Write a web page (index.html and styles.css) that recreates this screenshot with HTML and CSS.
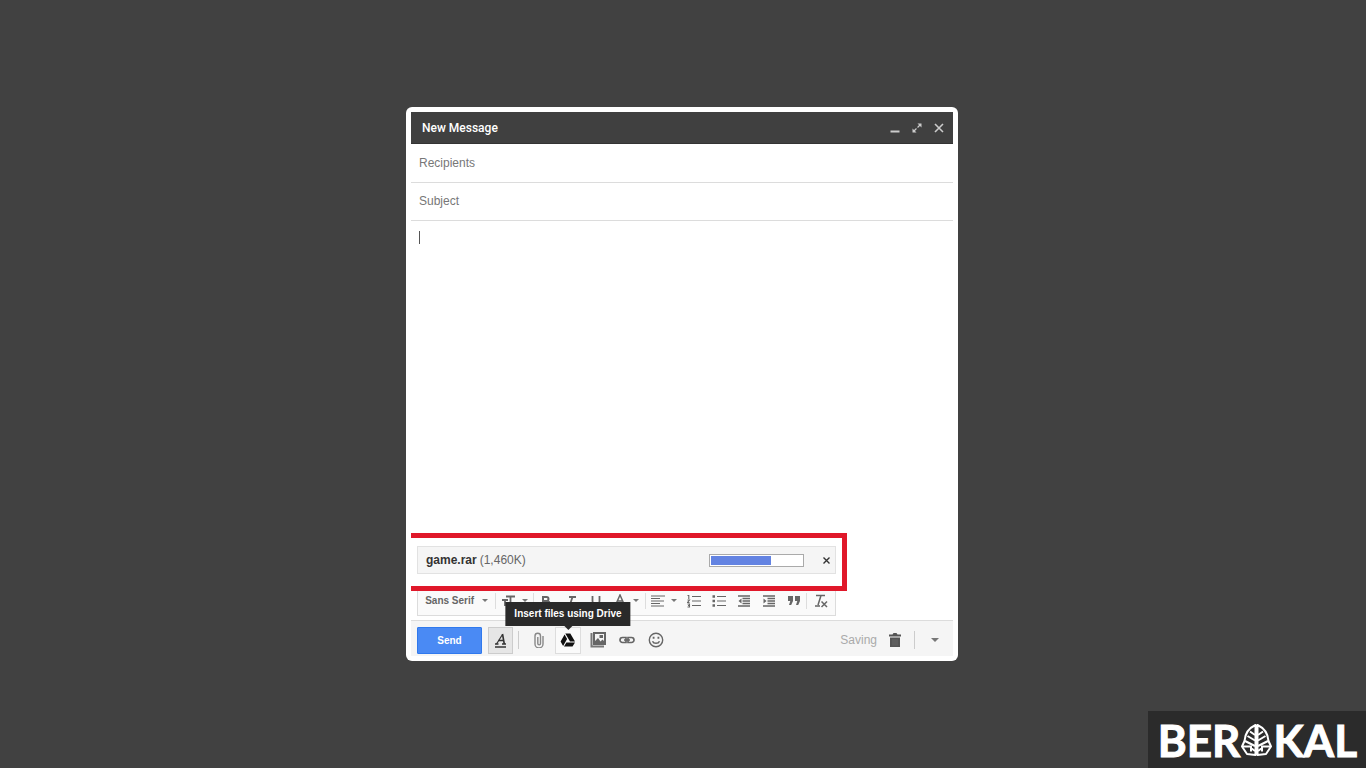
FILE: index.html
```html
<!DOCTYPE html>
<html lang="en">
<head>
<meta charset="utf-8">
<meta name="viewport" content="width=device-width, initial-scale=1">
<title>New Message</title>
<link rel="stylesheet" href="styles.css">
</head>
<body>
<main class="stage">
  <form class="compose" onsubmit="return false">
    <header class="compose-header">
      <h1 class="compose-title">New Message</h1>
      <button type="button" class="window-button" aria-label="Minimize"><svg width="12" height="12" viewBox="0 0 12 12"><path d="M1.5 9.500h9" stroke="currentColor" stroke-width="2"/></svg></button>
      <button type="button" class="window-button" aria-label="Full screen"><svg width="12" height="12" viewBox="0 0 12 12"><path d="M3 9l6-6" stroke="currentColor" stroke-width="1.200" stroke-dasharray="3.500 1.500"/><path d="M6.500 1.500h4v4zM1.500 6.500v4h4z" fill="currentColor"/></svg></button>
      <button type="button" class="window-button" aria-label="Close"><svg width="12" height="12" viewBox="0 0 12 12"><path d="M2 2l8 8M10 2l-8 8" stroke="currentColor" stroke-width="1.600"/></svg></button>
    </header>
    <input class="field" type="text" aria-label="Recipients" placeholder="Recipients">
    <input class="field" type="text" aria-label="Subject" placeholder="Subject">
    <textarea class="message" aria-label="Message body"></textarea>

    <section class="highlight" aria-label="Attachments">
      <div class="attachment">
        <span class="file-name">game.rar</span>
        <span class="file-size">(1,460K)</span>
        <div class="progress" role="progressbar" aria-label="Upload progress" aria-valuenow="66" aria-valuemin="0" aria-valuemax="100"><div class="progress-fill" style="width:66%"></div></div>
        <button type="button" class="remove" aria-label="Cancel upload"><svg width="9" height="9" viewBox="0 0 9 9"><path d="M1.500 1.500l6 6M7.500 1.500l-6 6" stroke="currentColor" stroke-width="1.400"/></svg></button>
      </div>
    </section>

    <div class="format-bar" role="toolbar" aria-label="Formatting">
      <button type="button" class="format font-picker">Sans Serif<span class="caret"></span></button>
      <span class="divider"></span>
      <button type="button" class="format with-caret" aria-label="Size"><svg width="14" height="14" viewBox="0 0 14 14"><path d="M4 2.500h9M8.500 2.500V12M0 6h6M3 6v6" fill="none" stroke="currentColor" stroke-width="1.800"/></svg><span class="caret"></span></button>
      <span class="divider"></span>
      <div class="format-group">
        <button type="button" class="format" aria-label="Bold"><svg width="14" height="14" viewBox="0 0 14 14"><path d="M4 3v9h4a2.300 2.300 0 0 0 0-5H4h3.500a2 2 0 0 0 0-4z" fill="none" stroke="currentColor" stroke-width="2"/></svg></button>
        <button type="button" class="format" aria-label="Italic"><svg width="14" height="14" viewBox="0 0 14 14"><path d="M5 3h7M2 12h7M8.500 3l-3 9" stroke="currentColor" stroke-width="1.800"/></svg></button>
        <button type="button" class="format" aria-label="Underline"><svg width="14" height="14" viewBox="0 0 14 14"><path d="M3.500 2v5a3.500 3.500 0 0 0 7 0V2M2 13h10" fill="none" stroke="currentColor" stroke-width="1.800"/></svg></button>
      </div>
      <button type="button" class="format with-caret" aria-label="Text color"><svg width="14" height="14" viewBox="0 0 14 14"><path d="M3 10l4-9 4 9M4.500 7h5M1 13h12" fill="none" stroke="currentColor" stroke-width="1.500"/></svg><span class="caret"></span></button>
      <span class="divider"></span>
      <button type="button" class="format with-caret" aria-label="Align"><svg width="14" height="14" viewBox="0 0 14 14"><path d="M0 2h14M0 4.500h9M0 7h13M0 9.500h9M0 12h13" stroke="currentColor" stroke-width="1.200"/></svg><span class="caret"></span></button>
      <div class="format-group">
        <button type="button" class="format" aria-label="Numbered list"><svg width="14" height="14" viewBox="0 0 14 14"><path d="M5 2.500h9M5 7h9M5 11.500h9" stroke="currentColor" stroke-width="1.200"/><path d="M.5 1.500h1.300V5M.5 6h2L.5 8.500h2M.5 10h2v3h-2M1 11.500h1.500" fill="none" stroke="currentColor" stroke-width="1.100"/></svg></button>
        <button type="button" class="format" aria-label="Bulleted list"><svg width="14" height="14" viewBox="0 0 14 14"><path d="M5 2.500h9M5 7h9M5 11.500h9" stroke="currentColor" stroke-width="1.200"/><path d="M.5 1.200H3v2.500H.5zM.5 5.700H3v2.500H.5zM.5 10.200H3v2.500H.5z" fill="currentColor"/></svg></button>
        <button type="button" class="format" aria-label="Indent less"><svg width="14" height="14" viewBox="0 0 14 14"><path d="M1 2h12M5.500 4.500H13M5.500 7H13M5.500 9.500H13M1 12h12" stroke="currentColor" stroke-width="1.300"/><path d="M4.500 4.500v5L1.500 7z" fill="currentColor"/></svg></button>
        <button type="button" class="format" aria-label="Indent more"><svg width="14" height="14" viewBox="0 0 14 14"><path d="M1 2h12M5.500 4.500H13M5.500 7H13M5.500 9.500H13M1 12h12" stroke="currentColor" stroke-width="1.300"/><path d="M1.500 4.500v5l3-2.500z" fill="currentColor"/></svg></button>
        <button type="button" class="format" aria-label="Quote"><svg width="14" height="14" viewBox="0 0 14 14"><path d="M1 2h5v5l-1.800 4H2l1.300-4H1zM8 2h5v5l-1.800 4H9l1.300-4H8z" fill="currentColor"/></svg></button>
      </div>
      <span class="divider"></span>
      <button type="button" class="format clear" aria-label="Remove formatting"><svg width="14" height="14" viewBox="0 0 14 14"><path d="M2 1.500h9M7 1.500L4 11M1 12h5M7.500 7.500l5.500 5.500M13 7.500L7.500 13" fill="none" stroke="currentColor" stroke-width="1.500"/></svg></button>
    </div>

    <footer class="actions">
      <button type="submit" class="send">Send</button>
      <button type="button" class="action pressed" aria-label="Formatting options" aria-pressed="true"><svg width="16" height="16" viewBox="0 0 16 16"><path d="M3.500 12L9.500 2.500" stroke="currentColor" stroke-width="1.200"/><path d="M9.500 2l1.800 10M5.500 8.500h5M2 12h3.500M9 12h4" fill="none" stroke="currentColor" stroke-width="1.600"/><path d="M2 15h11" stroke="currentColor" stroke-width="1.500"/></svg></button>
      <span class="divider tall"></span>
      <button type="button" class="action" aria-label="Attach files"><svg width="16" height="16" viewBox="0 0 16 16"><path d="M12 4v8a4 4 0 0 1-8 0V4a2.700 2.700 0 0 1 5.500 0v7.500a1.300 1.300 0 0 1-2.700 0V5" fill="none" stroke="#888" stroke-width="1.400"/></svg></button>
      <button type="button" class="action hovered" aria-describedby="drive-tip" aria-label="Google Drive"><svg width="16" height="16" viewBox="0 0 16 16"><path d="M5.300 1.500h5l4.700 8h-5zM4.600 2.600l2.500 4.300-4 7L.6 9.600zM6.400 10.500H15l-2.500 4H4z" fill="#111"/></svg><span class="tooltip" role="tooltip" id="drive-tip">Insert files using Drive</span></button>
      <button type="button" class="action" aria-label="Insert photo"><svg width="16" height="16" viewBox="0 0 16 16"><path d="M1.500 1v13.500H14" fill="none" stroke="#777" stroke-width="2"/><path fill-rule="evenodd" d="M3 0h13v13H3zM5 2v7l3-3 2.500 3.500 2-2L14 9V2z" fill="currentColor"/><path d="M9.500 3h3.500v3H9.500z" fill="currentColor"/></svg></button>
      <button type="button" class="action" aria-label="Insert link"><svg width="18" height="16" viewBox="0 0 18 16"><path d="M8 5.500H4.500a2.500 2.500 0 0 0 0 5H8zM10 5.500h3.500a2.500 2.500 0 0 1 0 5H10zM6 8h6" fill="none" stroke="currentColor" stroke-width="1.700"/></svg></button>
      <button type="button" class="action" aria-label="Insert emoticon"><svg width="16" height="16" viewBox="0 0 16 16"><circle cx="8" cy="8" r="6.700" fill="none" stroke="currentColor" stroke-width="1.400"/><path d="M4.700 4.800h1.800v2H4.700zM9.500 4.800h1.800v2H9.500z" fill="currentColor"/><path d="M4.500 9.200a3.700 3.200 0 0 0 7 0" fill="none" stroke="currentColor" stroke-width="1.500"/></svg></button>
      <span class="status" role="status">Saving</span>
      <button type="button" class="action narrow" aria-label="Discard draft"><svg width="12" height="14" viewBox="0 0 12 14"><path d="M0 1.500h3.500L4.500 0h3l1 1.500H12v2H0zM1 4.500h10V14H1z" fill="#555"/><path d="M4 6v6.500M6 6v6.500M8 6v6.500" stroke="#777" stroke-width=".6"/></svg></button>
      <span class="divider tall"></span>
      <button type="button" class="action" aria-label="More options"><span class="caret large"></span></button>
    </footer>
  </form>
</main>

<aside class="brand" aria-label="Berakal">
  <span>BER</span>
  <svg class="leaf" width="33" height="34" viewBox="0 0 33 34"><g fill="none" stroke="#fff" stroke-width="2" stroke-linejoin="round"><path d="M15.500 2C9 5 5 11 4.500 18L2 23.500l5 7.500 8.500 1zM17.500 2C24 5 28 11 28.500 18l2.500 5.500-5 7.500-8.500 1z"/><path d="M15 12l-5-3.500M15 17.500L7.500 13M15 23L5 18M3 23.500h8v5M11 25l4 3M18 12l5-3.500M18 17.500l7.500-4.500M18 23l10-5M30 23.500h-8v5M22 25l-4 3"/></g></svg>
  <span>KAL</span>
</aside>
</body>
</html>
```
FILE: styles.css
```css
* {
  box-sizing: border-box;
}

body {
  margin: 0;
  background: #414141;
  color: #333;
  font-family: "Liberation Sans", Arial, sans-serif;
  font-size: 12px;
}

button {
  margin: 0;
  padding: 0;
  border: 0;
  background: none;
  color: inherit;
  font: inherit;
}

svg {
  display: block;
  flex: none;
}

.stage {
  display: flex;
  align-items: center;
  justify-content: center;
  min-height: 100vh;
  padding-right: 2px;
}

.compose {
  display: flex;
  flex-direction: column;
  width: 100%;
  max-width: 552px;
  padding: 5px;
  border-radius: 6px;
  background: #fff;
}

.compose-header {
  display: flex;
  align-items: center;
  gap: 2px;
  height: 32px;
  padding: 0 4px 0 11px;
  border-bottom: 1px solid #333;
  background: #404040;
  color: #fff;
}

.compose-title {
  flex: 1;
  margin: 0;
  font-family: Roboto, sans-serif;
  font-size: 12px;
  font-weight: 500;
}

.window-button {
  display: grid;
  place-items: center;
  width: 20px;
  height: 20px;
  color: #ccc;
}

.field {
  width: 100%;
  height: 38px;
  padding: 0 8px 1px;
  border: 0;
  border-bottom: 1px solid #dcdcdc;
  outline: 0;
  background: none;
  font: inherit;
}

.compose-header + .field {
  height: 39px;
}

.field::placeholder {
  color: #777;
  opacity: 1;
}

.message {
  width: 100%;
  height: 312px;
  padding: 10px 8px;
  border: 0;
  outline: 0;
  resize: none;
  background: linear-gradient(#555, #555) 8px 10px / 1px 13px no-repeat;
  font: inherit;
}

.highlight {
  width: 436px;
  max-width: 100%;
  padding: 8px 6px 12px;
  border: 5px solid #e0182a;
  border-left: 0;
}

.attachment {
  display: flex;
  align-items: center;
  gap: 3px;
  height: 28px;
  padding: 0 0 0 8px;
  border: 1px solid #e2e2e2;
  background: #f5f5f5;
}

.file-name {
  font-weight: bold;
}

.file-size {
  color: #666;
}

.progress {
  width: 95px;
  height: 13px;
  margin-left: auto;
  padding: 1px;
  border: 1px solid #aaa;
  background: #fff;
}

.progress-fill {
  height: 100%;
  background: #6383e2;
}

.remove {
  display: grid;
  place-items: center;
  width: 18px;
  height: 18px;
  margin-left: 10px;
}

.format-bar {
  display: flex;
  align-items: center;
  width: 419px;
  max-width: 100%;
  height: 25px;
  margin: 0 6px 4px;
  padding-bottom: 5px;
  border: 1px solid #dcdcdc;
  border-top: 0;
  background: #fafafa;
  color: #666;
}

.format-group {
  display: flex;
  gap: 1px;
}

.format {
  display: flex;
  align-items: center;
  justify-content: center;
  width: 24px;
  height: 20px;
}

.with-caret {
  gap: 6px;
  width: 37px;
}

.font-picker {
  gap: 8px;
  width: 78px;
  font-size: 10px;
  font-weight: bold;
}

.clear {
  width: 28px;
}

.caret {
  border: 3px solid transparent;
  border-top-color: #777;
  border-bottom: 0;
}

.caret.large {
  border-width: 4px 4px 0;
}

.divider {
  width: 1px;
  height: 16px;
  background: #ddd;
}

.divider.tall {
  height: 18px;
  margin: 0 5px;
  background: #ccc;
}

.actions {
  display: flex;
  align-items: center;
  height: 36px;
  padding: 3px 4px 0 6px;
  border-top: 1px solid #dcdcdc;
  background: #f5f5f5;
  color: #666;
}

.send {
  width: 65px;
  height: 27px;
  margin-right: 6px;
  border: 1px solid #3079ed;
  border-radius: 1px;
  background: #4a8af4;
  color: #fff;
  font-size: 10px;
  font-weight: bold;
}

.action {
  position: relative;
  display: grid;
  place-items: center;
  width: 29px;
  height: 27px;
}

.action.narrow {
  width: 28px;
}

.action.pressed {
  width: 25px;
  border: 1px solid #ccc;
  background: #e6e6e6;
  color: #333;
}

.action.hovered {
  width: 26px;
  margin: 0 2px;
  border: 1px solid #ddd;
  background: #fafafa;
}

.tooltip {
  position: absolute;
  bottom: 100%;
  left: 50%;
  padding: 6px 9px;
  transform: translateX(-50%);
  margin-bottom: 2px;
  background: #2a2a2a;
  color: #fff;
  font-size: 10px;
  font-weight: bold;
  line-height: 12px;
  white-space: nowrap;
}

.tooltip::after {
  position: absolute;
  top: 100%;
  left: 50%;
  margin-left: -4px;
  border: 4px solid transparent;
  border-top-color: #2a2a2a;
  border-bottom: 0;
  content: "";
}

.status {
  margin-left: auto;
  margin-right: 4px;
  color: #aaa;
}

.brand {
  position: fixed;
  right: 0;
  bottom: 0;
  display: flex;
  align-items: center;
  height: 57px;
  padding: 0 9px 0 10px;
  background: #2b2b2b;
  color: #fff;
  font-family: Lato, sans-serif;
  font-size: 44px;
  font-weight: bold;
  line-height: 48px;
  -webkit-text-stroke: 1px #fff;
}
```
